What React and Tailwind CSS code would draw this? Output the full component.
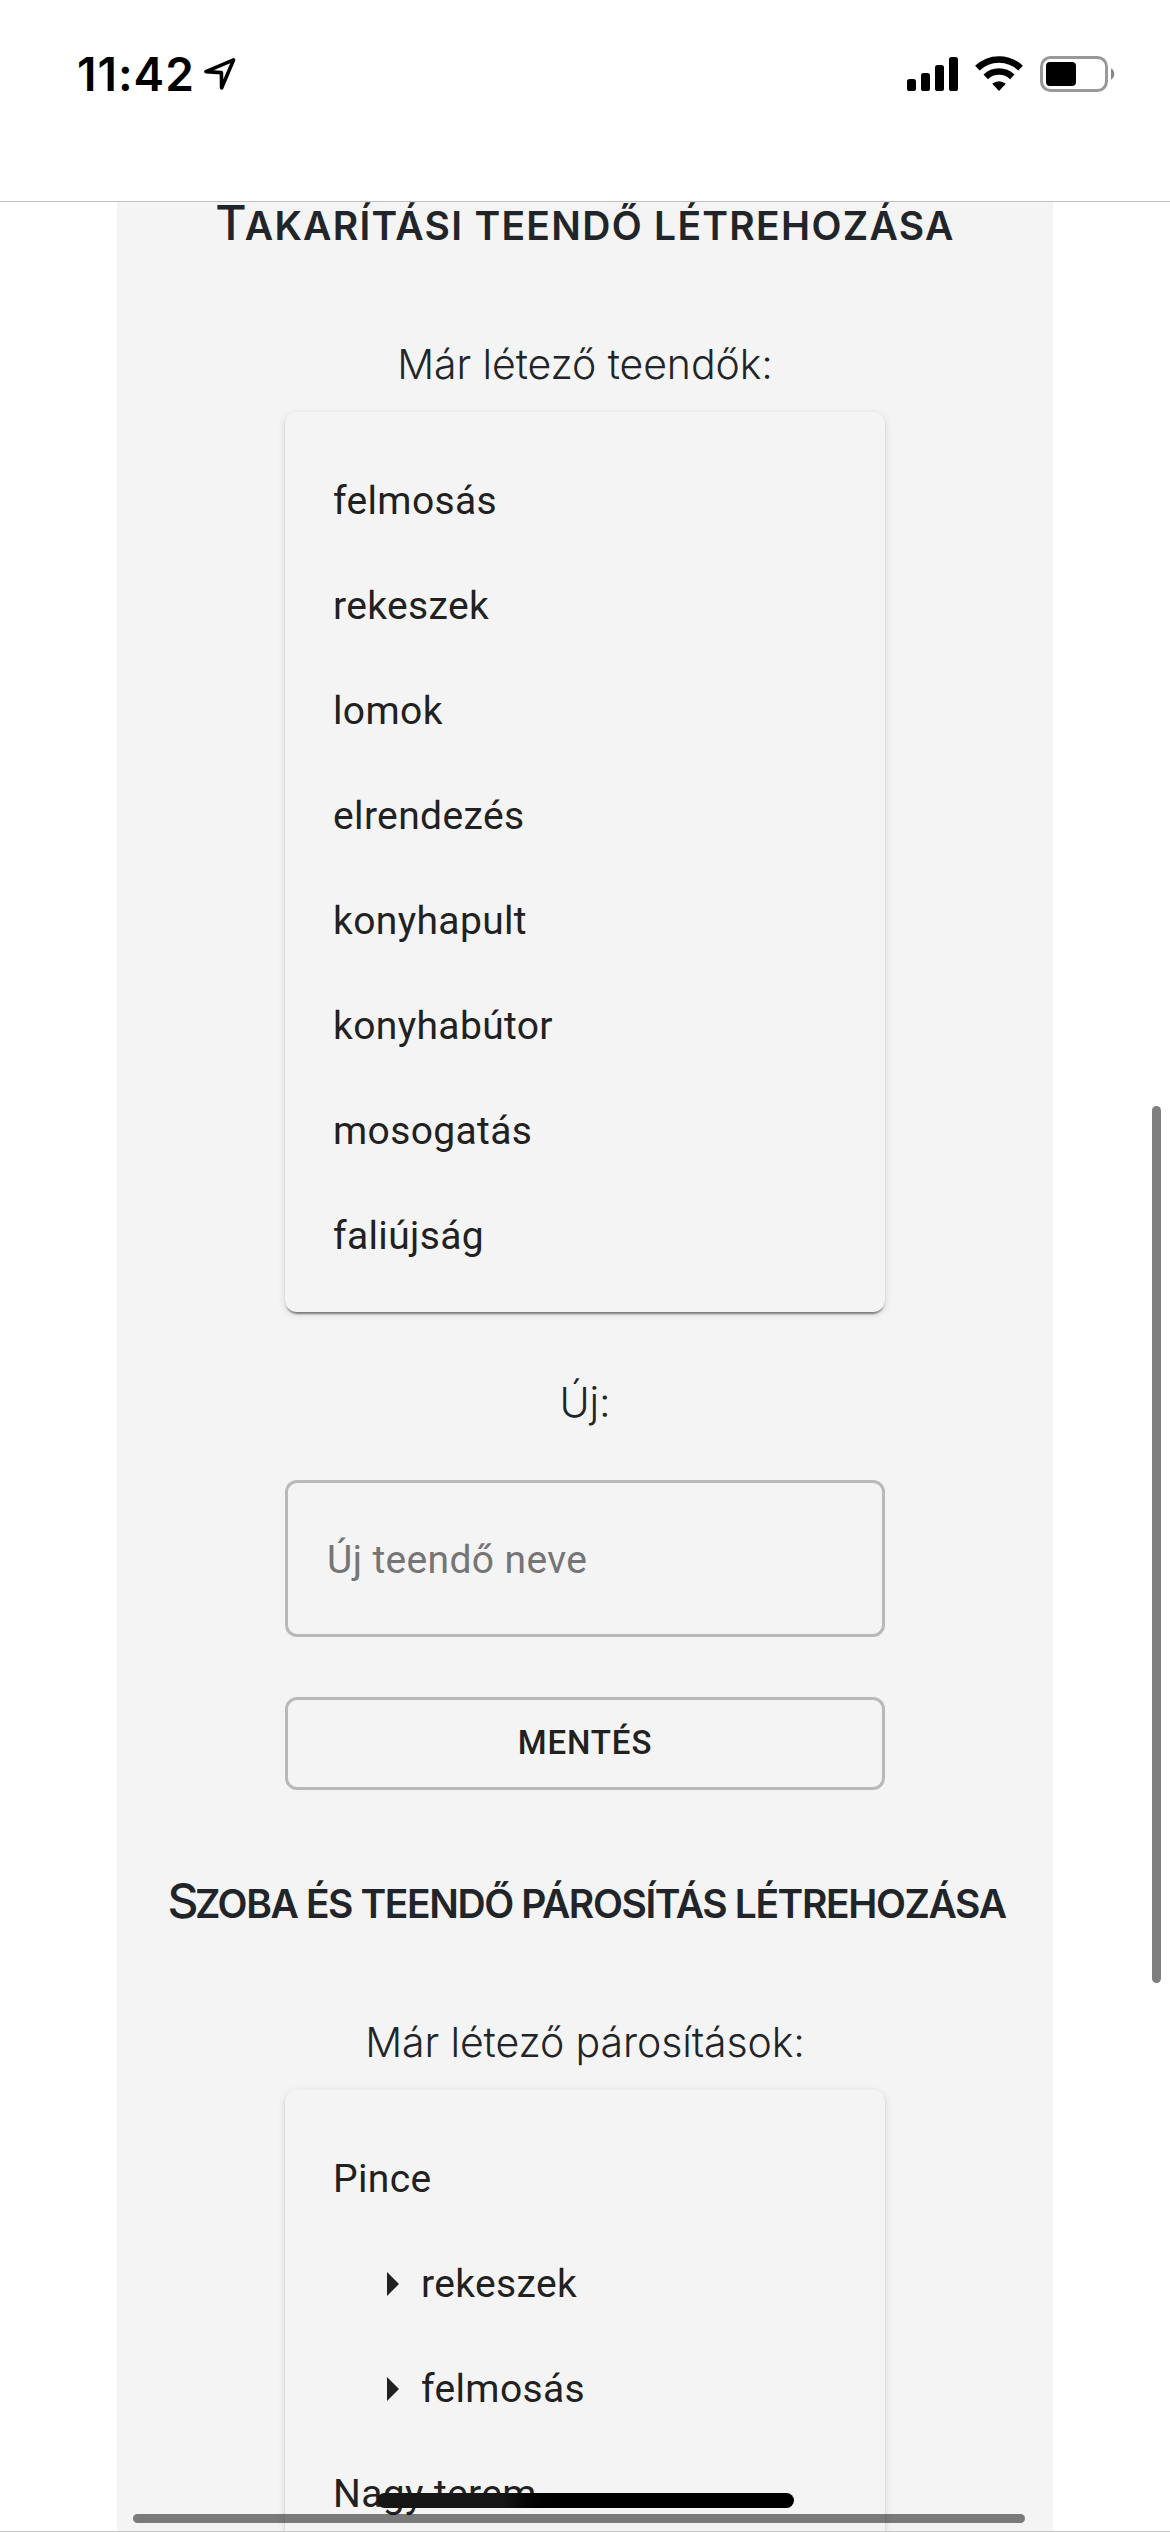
import React from "react";

const tasks = [
  "felmosás",
  "rekeszek",
  "lomok",
  "elrendezés",
  "konyhapult",
  "konyhabútor",
  "mosogatás",
  "faliújság",
];

const pairings = [
  { room: "Pince", tasks: ["rekeszek", "felmosás"] },
  { room: "Nagy terem", tasks: [] },
];

function StatusBar() {
  return (
    <header className="flex h-[202px] shrink-0 items-start justify-between border-b border-[#c0c0c0] bg-white pl-[77px] pr-[55px] pt-[45px]">
      <div className="flex items-start">
        <span className="w-[126px] whitespace-nowrap text-[46px] font-semibold leading-[58px] tracking-[1px] text-black">
          11:42
        </span>
        <svg className="mt-[12px] h-[34px] w-[34px]" viewBox="0 0 34 34" fill="none" stroke="#000" strokeWidth="3.6" strokeLinejoin="round">
          <path d="M30.6 2.9 2.9 14.6 18.4 15.6 18.6 31 Z" />
        </svg>
      </div>
      <div className="flex items-start pt-[10px]">
        <svg className="h-[36px] w-[51px]" viewBox="0 0 51 36" fill="#000">
          <rect x="0" y="24" width="9" height="12" rx="2.6" />
          <rect x="14" y="18" width="9" height="18" rx="2.6" />
          <rect x="28" y="10" width="9" height="26" rx="2.6" />
          <rect x="42" y="2" width="9" height="34" rx="2.6" />
        </svg>
        <svg className="ml-[17px] h-[36px] w-[48px]" viewBox="0 0 48 36" fill="none" stroke="#000">
          <path d="M2.4 13.2 A31 31 0 0 1 45.6 13.2" strokeWidth="6.6" />
          <path d="M10.7 21.8 A19.5 19.5 0 0 1 37.3 21.8" strokeWidth="6.4" />
          <path d="M24 36 L17.2 28.7 A10.5 10.5 0 0 1 30.8 28.7 Z" fill="#000" stroke="none" />
        </svg>
        <svg className="ml-[17px] mt-[1px] h-[36px] w-[75px]" viewBox="0 0 75 36">
          <rect x="1.5" y="1.5" width="65" height="33" rx="9" fill="none" stroke="#999" strokeWidth="3" />
          <rect x="6" y="6" width="30" height="24" rx="4" fill="#000" />
          <path d="M71 12.3 A6.6 6.6 0 0 1 71 23.7 Z" fill="#858585" />
        </svg>
      </div>
    </header>
  );
}

function Label({ children, className }) {
  return (
    <p className={`whitespace-nowrap text-center text-[41px] font-light leading-[60px] tracking-[-0.1px] text-[#212529] ${className}`}>
      {children}
    </p>
  );
}

function Card({ children }) {
  return (
    <div className="mt-[18px] h-[900px] w-[600px] shrink-0 rounded-[12px] bg-[#f4f4f4] pl-[48px] pt-[37px] font-['Roboto',sans-serif] text-[39px] tracking-[0.366px] text-[#212121] shadow-[0_4px_2px_-2px_rgba(0,0,0,0.36),0_2px_2px_0_rgba(0,0,0,0.14),0_2px_8px_0_rgba(0,0,0,0.12)]">
      {children}
    </div>
  );
}

export default function App() {
  return (
    <div className="relative flex h-[2532px] w-[1170px] flex-col overflow-hidden bg-white font-['Inter',sans-serif]">
      <StatusBar />

      <main className="flex min-h-0 flex-1 justify-center overflow-hidden">
        <section className="flex h-[2800px] w-[936px] flex-col items-center bg-[#f4f4f4]">
          <h1 className="-mt-[9px] h-[60px] whitespace-nowrap text-[48px] font-medium leading-[60px] text-[#212529]">
            <span className="mr-[-2px]">T</span>
            <span className="text-[39px] font-[560] leading-none tracking-[1.3px]">AKARÍTÁSI TEENDŐ LÉTREHOZÁSA</span>
          </h1>

          <Label className="mt-[81px]">Már létező teendők:</Label>
          <Card>
            <ul>
              {tasks.map((task) => (
                <li key={task} className="h-[105px] leading-[105px]">{task}</li>
              ))}
            </ul>
          </Card>

          <Label className="mt-[60px]">Új:</Label>
          <input
            type="text"
            placeholder="Új teendő neve"
            className="mt-[48px] h-[157px] w-[600px] shrink-0 rounded-[12px] border-[3px] border-[#b9b9b9] bg-transparent pl-[39px] pt-[2px] font-['Roboto',sans-serif] text-[39px] tracking-[0.366px] placeholder:text-[#757575]"
          />
          <button className="mt-[60px] h-[93px] w-[600px] shrink-0 rounded-[12px] border-[3px] border-[#b9b9b9] pb-[2px] font-['Roboto',sans-serif] text-[33px] font-medium tracking-[0.9px] text-[#212121]">
            MENTÉS
          </button>

          <h2 className="ml-[3px] mt-[81px] h-[60px] whitespace-nowrap text-[48px] font-medium leading-[60px] text-[#212529]">
            <span className="mr-[-3.5px]">S</span>
            <span className="text-[39px] font-[560] leading-none tracking-[-1.4px]">ZOBA ÉS TEENDŐ PÁROSÍTÁS LÉTREHOZÁSA</span>
          </h2>

          <Label className="mt-[81px]">Már létező párosítások:</Label>
          <Card>
            {pairings.map(({ room, tasks: assigned }) => (
              <div key={room}>
                <div className="h-[105px] leading-[105px]">{room}</div>
                {assigned.map((task) => (
                  <div key={task} className="flex h-[105px] items-center pl-[54px] leading-[105px]">
                    <svg className="mb-px mr-[22px] h-[24px] w-[12px]" viewBox="0 0 12 24" fill="#212121">
                      <path d="M0 0 12 12 0 24Z" />
                    </svg>
                    {task}
                  </div>
                ))}
              </div>
            ))}
          </Card>
        </section>
      </main>

      <div className="absolute left-[1152px] top-[1106px] h-[877px] w-[9px] rounded-full bg-[#7f7f7f]" />
      <div className="absolute left-[377px] top-[2493px] h-[15px] w-[417px] rounded-full bg-gradient-to-r from-[#161616] from-30% to-black to-45%" />
      <div className="absolute left-[133px] top-[2514px] h-[9px] w-[892px] rounded-full bg-black/50" />
      <div className="absolute bottom-0 left-0 h-px w-full bg-[#c4c4c4]" />
    </div>
  );
}
